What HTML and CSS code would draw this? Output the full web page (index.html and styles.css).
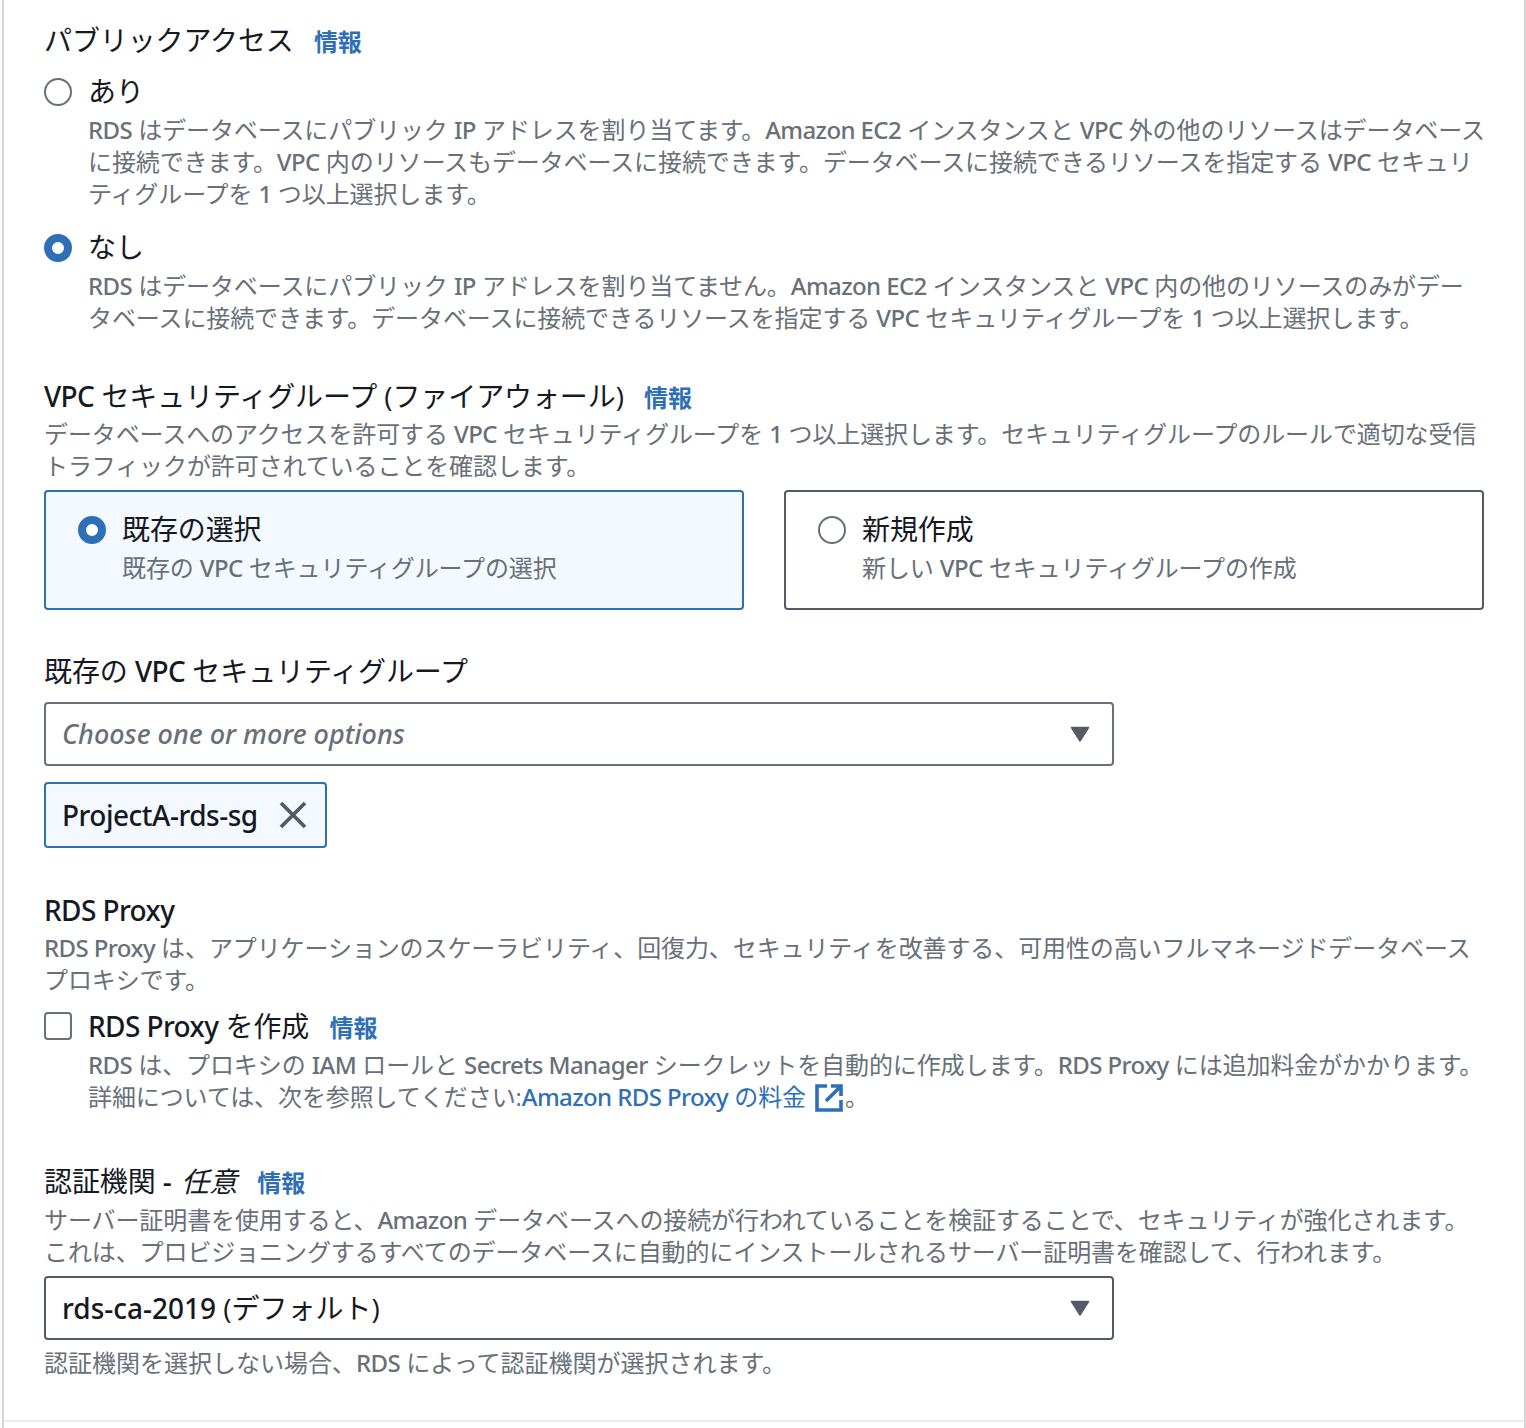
FILE: index.html
```html
<!DOCTYPE html>
<html lang="ja">
<head>
<meta charset="utf-8">
<title>接続</title>
<link rel="stylesheet" href="styles.css">
</head>
<body>
<main class="panel">
  <section class="group group-public">
    <h3 class="label">パブリックアクセス <a class="info">情報</a></h3>
    <div class="option">
      <span class="radio"></span>
      <div class="option-body">
        <div class="option-title">あり</div>
        <p class="desc"><span class="en">RDS</span> はデータベースにパブリック <span class="en">IP</span> アドレスを割り当てます。<span class="en">Amazon EC2</span> インスタンスと <span class="en">VPC</span> 外の他のリソースはデータベース<br>に接続できます。<span class="en">VPC</span> 内のリソースもデータベースに接続できます。データベースに接続できるリソースを指定する <span class="en">VPC</span> セキュリ<br>ティグループを <span class="en">1</span> つ以上選択します。</p>
      </div>
    </div>
    <div class="option option-next">
      <span class="radio radio-on"></span>
      <div class="option-body">
        <div class="option-title">なし</div>
        <p class="desc"><span class="en">RDS</span> はデータベースにパブリック <span class="en">IP</span> アドレスを割り当てません。<span class="en">Amazon EC2</span> インスタンスと <span class="en">VPC</span> 内の他のリソースのみがデー<br>タベースに接続できます。データベースに接続できるリソースを指定する <span class="en">VPC</span> セキュリティグループを <span class="en">1</span> つ以上選択します。</p>
      </div>
    </div>
  </section>

  <section class="group group-vpc">
    <h3 class="label"><span class="en">VPC</span> セキュリティグループ (ファイアウォール) <a class="info">情報</a></h3>
    <p class="desc lead">データベースへのアクセスを許可する <span class="en">VPC</span> セキュリティグループを <span class="en">1</span> つ以上選択します。セキュリティグループのルールで適切な受信<br>トラフィックが許可されていることを確認します。</p>
    <div class="cards">
      <div class="card card-on">
        <span class="radio radio-on"></span>
        <div class="option-body">
          <div class="option-title">既存の選択</div>
          <div class="card-desc">既存の <span class="en">VPC</span> セキュリティグループの選択</div>
        </div>
      </div>
      <div class="card">
        <span class="radio"></span>
        <div class="option-body">
          <div class="option-title">新規作成</div>
          <div class="card-desc">新しい <span class="en">VPC</span> セキュリティグループの作成</div>
        </div>
      </div>
    </div>
  </section>

  <section class="group group-existing">
    <h3 class="label">既存の <span class="en">VPC</span> セキュリティグループ</h3>
    <div class="select">
      <span class="placeholder">Choose one or more options</span>
      <svg class="caret" width="20" height="16" viewBox="0 0 20 16"><path d="M1.5 1.5h17L10 15z" fill="#545b64" stroke="#545b64" stroke-width="1.5" stroke-linejoin="round"/></svg>
    </div>
    <div class="token">
      <span class="en">ProjectA-rds-sg</span>
      <svg class="token-x" width="28" height="28" viewBox="0 0 28 28"><path d="M2 2l24 24M26 2L2 26" fill="none" stroke="#545b64" stroke-width="3.8"/></svg>
    </div>
  </section>

  <section class="group group-proxy">
    <h3 class="label"><span class="en">RDS Proxy</span></h3>
    <p class="desc lead lead-proxy"><span class="en">RDS Proxy</span> は、アプリケーションのスケーラビリティ、回復力、セキュリティを改善する、可用性の高いフルマネージドデータベース<br>プロキシです。</p>
    <div class="option option-check">
      <span class="check"></span>
      <div class="option-body">
        <div class="option-title"><span class="en">RDS Proxy</span> を作成 <a class="info">情報</a></div>
        <p class="desc"><span class="en">RDS</span> は、プロキシの <span class="en">IAM</span> ロールと <span class="en">Secrets Manager</span> シークレットを自動的に作成します。<span class="en">RDS Proxy</span> には追加料金がかかります。<br>詳細については、次を参照してください:<a class="link"><span class="en">Amazon RDS Proxy</span> の料金 <svg class="ext" width="28" height="28" viewBox="0 0 28 28"><path d="M12 2H2v24h24V16" fill="none" stroke="#2e6fb7" stroke-width="3.6"/><path d="M16 2h10v10M25 3L11 17" fill="none" stroke="#2e6fb7" stroke-width="3.6"/></svg></a>。</p>
      </div>
    </div>
  </section>

  <section class="group group-ca">
    <h3 class="label">認証機関 <span class="en">-</span> <em class="opt">任意</em> <a class="info">情報</a></h3>
    <p class="desc lead lead-ca">サーバー証明書を使用すると、<span class="en">Amazon</span> データベースへの接続が行われていることを検証することで、セキュリティが強化されます。<br>これは、プロビジョニングするすべてのデータベースに自動的にインストールされるサーバー証明書を確認して、行われます。</p>
    <div class="select select-ca">
      <span class="value"><span class="en">rds-ca-2019</span> (デフォルト)</span>
      <svg class="caret" width="20" height="16" viewBox="0 0 20 16"><path d="M1.5 1.5h17L10 15z" fill="#545b64" stroke="#545b64" stroke-width="1.5" stroke-linejoin="round"/></svg>
    </div>
    <p class="desc hint">認証機関を選択しない場合、<span class="en">RDS</span> によって認証機関が選択されます。</p>
  </section>
  <div class="rule"></div>
</main>
</body>
</html>
```

FILE: styles.css
```css
* { box-sizing: border-box; }
html, body { margin: 0; padding: 0; background: #fff; }
body {
  font-family: "Open Sans", "Noto Sans CJK JP", sans-serif;
  color: #16191f;
  font-size: 24px;
  line-height: 32px;
}
.panel {
  width: 1524px;
  height: 1428px;
  margin: 0 0 0 2px;
  padding: 24px 40px 0;
  border-left: 2px solid #d5d5d5;
  border-right: 2px solid #d5d5d5;
  overflow: hidden;
}
.en {
  font-family: "Noto Sans", "Open Sans", sans-serif;
  font-weight: 500;
  letter-spacing: -0.6px;
}
.label {
  margin: 0;
  font-size: 28px;
  font-weight: 400;
  line-height: 32px;
  letter-spacing: -0.1px;
  white-space: nowrap;
}
.info {
  margin-left: 13px;
  color: #2e6fb7;
  font-size: 24px;
  font-weight: 700;
  letter-spacing: 0;
}
.desc {
  margin: 0;
  color: #687078;
  font-size: 24px;
  line-height: 32px;
  letter-spacing: -0.1px;
  white-space: nowrap;
}
.option { display: flex; margin-top: 13px; }
.option-next { margin-top: 17px; }
.option-body { margin-left: 16px; }
.option-title {
  margin-bottom: 3px;
  font-size: 28px;
  line-height: 40px;
  letter-spacing: -0.1px;
  white-space: nowrap;
}
.radio {
  flex: none;
  width: 28px;
  height: 28px;
  margin-top: 7px;
  border: 2px solid #687078;
  border-radius: 50%;
  background: #fff;
}
.radio-on { border: 8px solid #2e6fb7; }
.group-vpc { margin-top: 46px; }
.lead { margin-top: 4px; }
.lead-proxy { margin-top: 6px; }
.lead-ca { margin-top: 5px; }
.cards {
  display: grid;
  grid-template-columns: 700px 700px;
  column-gap: 40px;
  margin-top: 8px;
}
.card {
  display: flex;
  height: 120px;
  padding: 17px 32px;
  border: 2px solid #545b64;
  border-radius: 4px;
}
.card-on { border-color: #2e6fb7; background: #f4f9ff; }
.card-desc {
  margin-top: -3px;
  color: #687078;
  font-size: 24px;
  line-height: 38px;
  letter-spacing: -0.1px;
  white-space: nowrap;
}
.group-existing { margin-top: 45px; }
.select {
  display: flex;
  align-items: center;
  justify-content: space-between;
  width: 1070px;
  height: 64px;
  margin-top: 15px;
  padding: 0 22px 0 16px;
  border: 2px solid #687078;
  border-radius: 4px;
}
.placeholder {
  color: #687078;
  font-family: "Noto Sans", "Open Sans", sans-serif;
  font-size: 27px;
  font-style: italic;
  font-weight: 500;
}
.value { font-size: 28px; }
.value .en { letter-spacing: 0; }
.token {
  display: inline-flex;
  align-items: center;
  height: 66px;
  margin-top: 16px;
  padding: 0 18px 0 16px;
  border: 2px solid #2e6fb7;
  border-radius: 4px;
  background: #f4f9ff;
  font-size: 28px;
  vertical-align: top;
}
.token .en { letter-spacing: -0.5px; }
.token-x { margin-left: 21px; }
.group-proxy { margin-top: 46px; }
.option-check { margin-top: 10px; }
.option-check .option-title { margin-bottom: 1px; }
.check {
  flex: none;
  width: 28px;
  height: 28px;
  margin-top: 6px;
  border: 2px solid #687078;
  border-radius: 4px;
}
.link { color: #2e6fb7; }
.ext { margin: 0 2px 0 3px; vertical-align: -6px; }
.group-ca { margin-top: 52px; }
.opt { margin-left: 3px; font-style: italic; }
.select-ca { margin-top: 8px; border-color: #545b64; }
.hint { margin-top: 7px; letter-spacing: 0; }
.rule {
  margin: 41px -40px 0;
  border-top: 2px solid #eaeded;
}
```
